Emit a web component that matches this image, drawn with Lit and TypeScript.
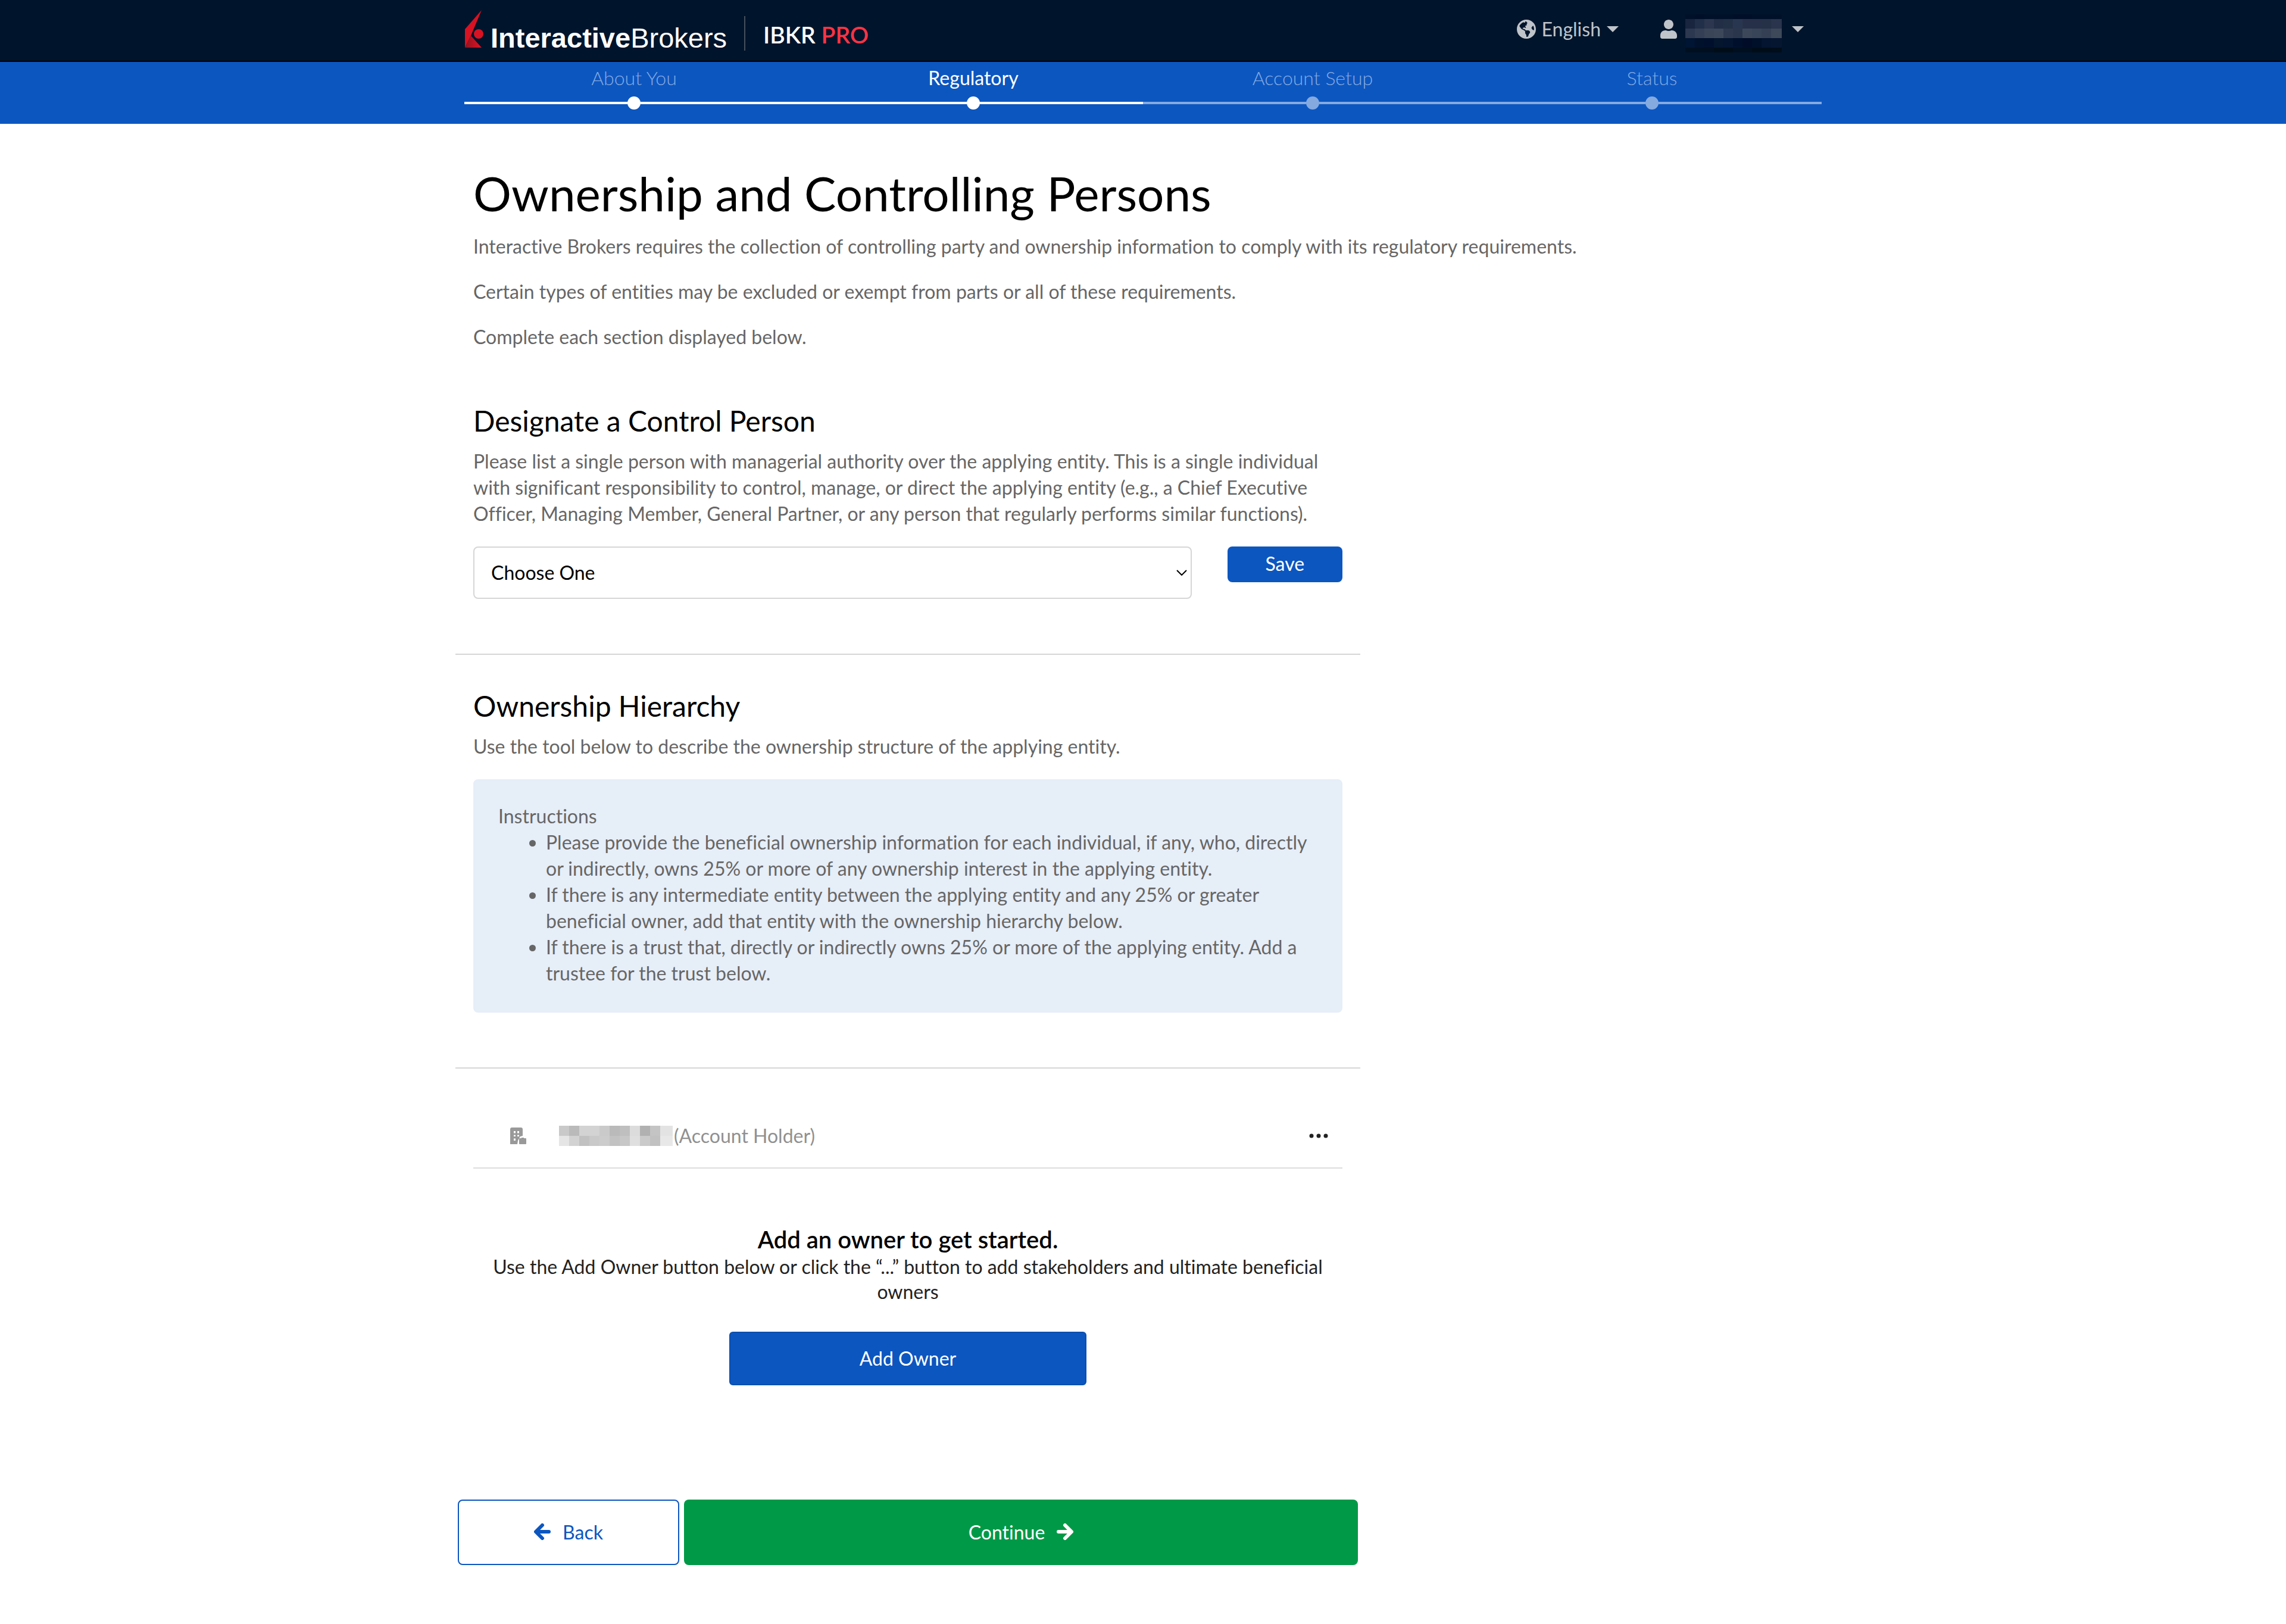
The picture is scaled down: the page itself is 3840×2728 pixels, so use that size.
import { LitElement, html, svg, css } from "lit";
import { customElement, property } from "lit/decorators.js";
import { classMap } from "lit/directives/class-map.js";

type StepState = "done" | "todo";

interface Step {
  label: string;
  state: StepState;
  current?: boolean;
}

const STEPS: Step[] = [
  { label: "About You", state: "done" },
  { label: "Regulatory", state: "done", current: true },
  { label: "Account Setup", state: "todo" },
  { label: "Status", state: "todo" },
];

const INTRO = [
  "Interactive Brokers requires the collection of controlling party and ownership information to comply with its regulatory requirements.",
  "Certain types of entities may be excluded or exempt from parts or all of these requirements.",
  "Complete each section displayed below.",
];

const INSTRUCTIONS = [
  "Please provide the beneficial ownership information for each individual, if any, who, directly or indirectly, owns 25% or more of any ownership interest in the applying entity.",
  "If there is any intermediate entity between the applying entity and any 25% or greater beneficial owner, add that entity with the ownership hierarchy below.",
  "If there is a trust that, directly or indirectly owns 25% or more of the applying entity. Add a trustee for the trust below.",
];

/* Mosaic rows: top offset, height and one colour per cell. */
interface MosaicRow {
  y: number;
  h: number;
  cells: string[];
}

const USER_MOSAIC: MosaicRow[] = [
  { y: 0, h: 8, cells: ["#001029", "#000f27", "#001029", "#001029", "#001029", "#000f27", "#000f27", "#001029", "#001029", "#001029"] },
  { y: 8, h: 16, cells: ["#19253f", "#222f48", "#2c364f", "#212e45", "#233147", "#293650", "#273049", "#273049", "#243147", "#2a344c"] },
  { y: 24, h: 16, cells: ["#2c384f", "#343f56", "#3a4558", "#3c475a", "#2e394f", "#2a364c", "#3c485a", "#384457", "#354054", "#3d4859"] },
  { y: 40, h: 16, cells: ["#001433", "#00112c", "#00102c", "#04152e", "#021430", "#00102c", "#000c28", "#00102a", "#041531", "#051631"] },
  { y: 56, h: 8, cells: ["#000f20", "#000f20", "#000e1f", "#000c17", "#000c17", "#000f20", "#000f20", "#000c18", "#000c17", "#000d1a"] },
];

const HOLDER_MOSAIC: MosaicRow[] = [
  { y: 0, h: 17, cells: ["#c9c9c9", "#bababa", "#d3d3d3", "#d3d3d3", "#cacaca", "#bababa", "#bfbfbf", "#dcdcdc", "#b1b1b1", "#c4c4c4", "#e3e3e3"] },
  { y: 17, h: 17, cells: ["#e5e5e5", "#d2d2d2", "#c1c1c1", "#c9c9c9", "#cccccc", "#c2c2c2", "#c7c7c7", "#dfdfdf", "#cacaca", "#c1c1c1", "#e8e8e8"] },
];

const mosaic = (rows: MosaicRow[], cell: number, width: number, height: number) => html`
  <svg class="mosaic" width=${width} height=${height} viewBox="0 0 ${width} ${height}" aria-hidden="true" shape-rendering="crispEdges">
    ${rows.map((row) =>
      row.cells.map(
        (fill, i) => svg`<rect x=${i * cell} y=${row.y} width=${i === row.cells.length - 1 ? width - i * cell : cell} height=${row.h} fill=${fill}></rect>`
      )
    )}
  </svg>
`;

const caret = html`<svg class="caret" width="20" height="10" viewBox="0 0 20 10" aria-hidden="true"><path d="M0 0h20L10 10z" fill="currentColor"></path></svg>`;

@customElement("site-header")
export class SiteHeader extends LitElement {
  static styles = css`
    :host {
      display: block;
      background: #00142b;
      border-bottom: 2px solid #000;
      color: #fff;
    }
    .inner {
      box-sizing: border-box;
      max-width: 2310px;
      min-height: 102px;
      margin: 0 auto;
      padding: 0 45px 0 16px;
      display: flex;
      justify-content: space-between;
    }
    .brand {
      display: flex;
      align-items: flex-start;
      padding-top: 17px;
      color: inherit;
      text-decoration: none;
    }
    .logo {
      display: flex;
      align-items: baseline;
      gap: 10px;
      font: 47px/46px "Liberation Sans", Arial, sans-serif;
    }
    .logo b {
      font-weight: 700;
    }
    .plan {
      margin: 10px 0 0 29px;
      padding: 4px 0 0 30px;
      border-left: 2px solid #46505e;
      font-size: 39px;
      font-weight: 600;
      line-height: 54px;
    }
    .plan em {
      font-style: normal;
      color: #ff3344;
    }
    nav {
      display: flex;
      align-items: center;
      gap: 70px;
      padding-bottom: 4px;
      color: #bfc4ca;
    }
    button {
      display: flex;
      align-items: center;
      gap: 10px;
      padding: 0;
      border: 0;
      background: none;
      color: inherit;
      font: inherit;
      line-height: 44px;
      cursor: pointer;
    }
    .account {
      gap: 14px;
    }
    .mosaic {
      margin: 14px 3px 0 0;
    }
  `;

  render() {
    return html`
      <div class="inner">
        <a class="brand" href="#home">
          <span class="logo">
            <svg width="33" height="63" viewBox="0 0 33 63" aria-hidden="true">
              <defs>
                <linearGradient id="shade" x1="0" y1="0" x2="1" y2="0">
                  <stop offset="0" stop-color="#8c1420"></stop>
                  <stop offset="0.85" stop-color="#d81222"></stop>
                </linearGradient>
              </defs>
              <path d="M28 0 0 32v31l10-20z" fill="#d81222"></path>
              <path d="M10 43 0 63h28z" fill="url(#shade)"></path>
              <circle cx="23" cy="40" r="8" fill="#d81222"></circle>
            </svg>
            <span><b>Interactive</b>Brokers</span>
          </span>
          <span class="plan">IBKR <em>PRO</em></span>
        </a>
        <nav>
          <button type="button">
            <svg width="32" height="32" viewBox="0 8 496 496" aria-hidden="true">
              <path
                fill="currentColor"
                d="M248 8C111.03 8 0 119.03 0 256s111.03 248 248 248 248-111.03 248-248S384.97 8 248 8zm82.29 357.6c-3.9 3.88-7.99 7.95-11.31 11.28-2.99 3-5.1 6.7-6.17 10.71-1.51 5.66-2.73 11.38-4.77 16.87l-17.39 46.85c-13.76 3-28 4.69-42.65 4.69v-27.38c1.69-12.62-7.64-36.26-22.63-51.25-6-6-9.37-14.14-9.37-22.63v-32.01c0-11.64-6.27-22.34-16.46-27.97-14.37-7.95-34.81-19.06-48.81-26.11-11.48-5.78-22.1-13.14-31.65-21.75l-.8-.72a114.792 114.792 0 0 1-18.06-20.74c-9.38-13.77-24.66-36.42-34.59-51.14 20.47-45.5 57.36-82.04 103.2-101.89l24.01 12.01C203.48 89.74 216 82.01 216 70.11v-11.3c7.99-1.29 16.12-2.11 24.39-2.42l28.3 28.3c6.25 6.25 6.25 16.38 0 22.63L264 112l-10.34 10.34c-3.12 3.12-3.12 8.19 0 11.31l4.69 4.69c3.12 3.12 3.12 8.19 0 11.31l-8 8a8.008 8.008 0 0 1-5.66 2.34h-8.99c-2.08 0-4.08.81-5.58 2.27l-9.92 9.65a8.008 8.008 0 0 0-1.58 9.31l15.59 31.19c2.66 5.32-1.21 11.58-7.15 11.58h-5.64c-1.93 0-3.79-.7-5.24-1.96l-9.28-8.06a16.017 16.017 0 0 0-15.55-3.1l-31.17 10.39a11.95 11.95 0 0 0-8.17 11.34c0 4.53 2.56 8.66 6.61 10.69l11.08 5.54c9.41 4.71 19.79 7.16 30.31 7.16s22.59 27.29 32 32h66.75c8.49 0 16.62 3.37 22.63 9.37l13.69 13.69a30.503 30.503 0 0 1 8.93 21.57 46.536 46.536 0 0 1-13.72 32.98zM417 274.25c-5.79-1.45-10.84-5-14.15-9.97l-17.98-26.97a23.97 23.97 0 0 1 0-26.62l19.59-29.38c2.32-3.47 5.5-6.29 9.24-8.15l12.98-6.49C440.2 193.59 448 223.87 448 256c0 8.67-.74 17.16-1.82 25.54L417 274.25z"
              ></path>
            </svg>
            <span>English</span>
            ${caret}
          </button>
          <button type="button" class="account" aria-label="Account menu">
            <svg width="28" height="32" viewBox="0 0 448 512" aria-hidden="true">
              <path
                fill="currentColor"
                d="M224 256c70.7 0 128-57.3 128-128S294.7 0 224 0 96 57.3 96 128s57.3 128 128 128zm89.6 32h-16.7c-22.2 10.2-46.9 16-72.9 16s-50.6-5.8-72.9-16h-16.7C60.2 288 0 348.2 0 422.4V464c0 26.5 21.5 48 48 48h352c26.5 0 48-21.5 48-48v-41.6c0-74.2-60.2-134.4-134.4-134.4z"
              ></path>
            </svg>
            ${mosaic(USER_MOSAIC, 16, 162, 64)} ${caret}
          </button>
        </nav>
      </div>
    `;
  }
}

@customElement("progress-steps")
export class ProgressSteps extends LitElement {
  @property({ attribute: false }) steps: Step[] = [];

  static styles = css`
    :host {
      display: block;
      background: #0c56c0;
    }
    ol {
      box-sizing: border-box;
      max-width: 2280px;
      min-height: 104px;
      margin: 0 auto;
      padding: 5px 0 0;
      list-style: none;
      display: grid;
      grid-template-columns: repeat(4, 1fr);
    }
    li {
      display: flex;
      flex-direction: column;
      gap: 9px;
      color: #85aae0;
      text-align: center;
      font-weight: 300;
      line-height: 44px;
      --track: #85aae0;
    }
    li.done {
      --track: #fff;
    }
    li.current {
      color: #fff;
      font-weight: 400;
    }
    .node {
      display: flex;
      align-items: center;
    }
    .node::before,
    .node::after {
      content: "";
      flex: 1;
      height: 4px;
      background: var(--track);
    }
    .dot {
      width: 22px;
      height: 22px;
      border-radius: 50%;
      background: var(--track);
    }
  `;

  render() {
    return html`
      <ol>
        ${this.steps.map(
          (s) => html`
            <li class=${classMap({ done: s.state === "done", current: !!s.current })}>
              <span>${s.label}</span>
              <span class="node"><span class="dot"></span></span>
            </li>
          `
        )}
      </ol>
    `;
  }
}

@customElement("app-root")
export class AppRoot extends LitElement {
  static styles = css`
    :host {
      display: block;
      min-height: 100vh;
      background: #fff;
      color: #666;
      font-family: Lato, "Open Sans", sans-serif;
      font-size: 32px;
      font-variant-ligatures: no-common-ligatures;
      line-height: 44px;
    }
    h1,
    h2,
    h3,
    p,
    ul {
      margin: 0;
    }
    main {
      box-sizing: border-box;
      max-width: 2310px;
      margin: 0 auto;
      padding: 68px 30px 98px 0;
    }
    .intro {
      padding: 0 30px;
      display: grid;
      gap: 32px;
    }
    h1 {
      margin-bottom: -12px;
      color: #000;
      font-size: 80px;
      font-weight: 400;
      line-height: 96px;
    }
    h2 {
      margin-bottom: 17px;
      color: #000;
      font-size: 48px;
      font-weight: 400;
      line-height: 58px;
    }
    .layout {
      display: grid;
      grid-template-columns: 2fr 1fr;
    }
    section {
      padding: 57px 30px 92px;
      border-bottom: 2px solid #d6d6d6;
    }
    section.first {
      padding-top: 90px;
    }
    section.last {
      padding: 91px 30px 192px;
      border-bottom: 0;
    }
    button,
    select {
      font: inherit;
      font-variant-ligatures: inherit;
      cursor: pointer;
    }
    .person {
      display: grid;
      grid-template-columns: repeat(12, 1fr);
      gap: 60px;
      align-items: start;
      margin-top: 33px;
    }
    .picker {
      grid-column: span 10;
      display: grid;
      align-items: center;
    }
    .picker > * {
      grid-area: 1 / 1;
    }
    .picker svg {
      justify-self: end;
      margin-right: 8px;
      pointer-events: none;
    }
    select {
      appearance: none;
      width: 100%;
      height: 88px;
      padding: 0 60px 0 28px;
      border: 2px solid #d6d6d6;
      border-radius: 8px;
      background: #fff;
      color: #000;
    }
    .save {
      grid-column: span 2;
      height: 60px;
      padding: 0 0 2px;
      border: 0;
      border-radius: 8px;
      background: #0c56c0;
      color: #fff;
    }
    .instructions {
      margin-top: 33px;
      padding: 40px 42px 44px;
      border-radius: 8px;
      background: #e6eef8;
    }
    .instructions ul {
      padding-left: 80px;
    }
    .holder {
      display: flex;
      align-items: center;
      padding: 0 22px 31px 62px;
      border-bottom: 2px solid #ddd;
      color: #909090;
    }
    .holder .mosaic {
      margin: 0 2px 0 55px;
    }
    .menu {
      display: flex;
      margin-left: auto;
      padding: 0 2px;
      border: 0;
      background: none;
      color: #222;
    }
    .empty {
      display: flex;
      flex-direction: column;
      align-items: center;
      padding: 94px 20px 0;
      color: #222;
      text-align: center;
    }
    .empty h3 {
      color: #000;
      font-size: 40px;
      font-weight: 600;
      line-height: 50px;
    }
    .empty p {
      line-height: 42px;
    }
    .add {
      width: 600px;
      max-width: 100%;
      height: 90px;
      margin-top: 46px;
      padding: 0;
      border: 2px solid #0a4faf;
      border-radius: 6px;
      background: #0c56c0;
      color: #fff;
    }
    .actions {
      display: grid;
      grid-template-columns: repeat(12, 1fr);
      gap: 8px;
      padding: 0 4px;
    }
    .actions button {
      display: flex;
      align-items: center;
      justify-content: center;
      gap: 20px;
      height: 110px;
      border-radius: 8px;
    }
    .back {
      grid-column: span 3;
      border: 2px solid #0c56c0;
      background: #fff;
      color: #0c56c0;
    }
    .continue {
      grid-column: span 9;
      border: 0;
      background: #009947;
      color: #fff;
    }
    .arrow {
      fill: none;
      stroke: currentColor;
      stroke-width: 6;
      stroke-linecap: round;
      stroke-linejoin: round;
      margin-bottom: 2px;
    }
  `;

  render() {
    return html`
      <site-header></site-header>
      <progress-steps .steps=${STEPS}></progress-steps>
      <main>
        <div class="intro">
          <h1>Ownership and Controlling Persons</h1>
          ${INTRO.map((text) => html`<p>${text}</p>`)}
        </div>
        <div class="layout">
          <div>
            <section class="first">
              <h2 id="control-heading">Designate a Control Person</h2>
              <p>
                Please list a single person with managerial authority over the applying entity. This is a single
                individual with significant responsibility to control, manage, or direct the applying entity (e.g., a
                Chief Executive Officer, Managing Member, General Partner, or any person that regularly performs similar
                functions).
              </p>
              <form class="person" @submit=${(e: Event) => e.preventDefault()}>
                <div class="picker">
                  <select aria-labelledby="control-heading">
                    <option>Choose One</option>
                  </select>
                  <svg width="18" height="10" viewBox="0 0 18 10" aria-hidden="true">
                    <path d="M1 1l8 8 8-8" fill="none" stroke="#000" stroke-width="2"></path>
                  </svg>
                </div>
                <button class="save" type="submit">Save</button>
              </form>
            </section>

            <section>
              <h2>Ownership Hierarchy</h2>
              <p>Use the tool below to describe the ownership structure of the applying entity.</p>
              <div class="instructions">
                <p>Instructions</p>
                <ul>
                  ${INSTRUCTIONS.map((text) => html`<li>${text}</li>`)}
                </ul>
              </div>
            </section>

            <section class="last">
              <div class="holder">
                <svg width="27" height="28" viewBox="0 0 27 28" aria-hidden="true">
                  <path
                    fill="#999"
                    fill-rule="evenodd"
                    d="M3 0h15a3 3 0 0 1 3 3v11l-4 1c-2 2-1 3-3 5l-1 2-1 6H0V3a3 3 0 0 1 3-3zM6 6v3.500h3V6zM12 6v3.500h3V6zM6 12.500v2.500h3v-2.500zM12 12.500v2.500h3v-2.500zM6 18.500v3.500h3v-3.500z"
                  ></path>
                  <path fill="#999" d="M19 18v-1h4v1h3a1 1 0 0 1 1 1v8a1 1 0 0 1-1 1H16a1 1 0 0 1-1-1v-8a1 1 0 0 1 1-1z"></path>
                </svg>
                ${mosaic(HOLDER_MOSAIC, 17, 191, 34)}
                <span>(Account Holder)</span>
                <button class="menu" type="button" aria-label="Account holder options">
                  <svg width="32" height="8" viewBox="0 0 32 8" aria-hidden="true" fill="currentColor">
                    <circle cx="4" cy="4" r="3.500"></circle>
                    <circle cx="16" cy="4" r="3.500"></circle>
                    <circle cx="28" cy="4" r="3.500"></circle>
                  </svg>
                </button>
              </div>
              <div class="empty">
                <h3>Add an owner to get started.</h3>
                <p>
                  Use the Add Owner button below or click the “...” button to add stakeholders and ultimate beneficial
                  owners
                </p>
                <button class="add" type="button">Add Owner</button>
              </div>
            </section>

            <div class="actions">
              <button class="back" type="button">
                <svg class="arrow" width="28" height="28" viewBox="0 0 28 28" aria-hidden="true">
                  <path d="M14 3 3 14l11 11M4 14h21"></path>
                </svg>
                <span>Back</span>
              </button>
              <button class="continue" type="button">
                <span>Continue</span>
                <svg class="arrow" width="28" height="28" viewBox="0 0 28 28" aria-hidden="true">
                  <path d="M14 3l11 11-11 11M24 14H3"></path>
                </svg>
              </button>
            </div>
          </div>
        </div>
      </main>
    `;
  }
}
